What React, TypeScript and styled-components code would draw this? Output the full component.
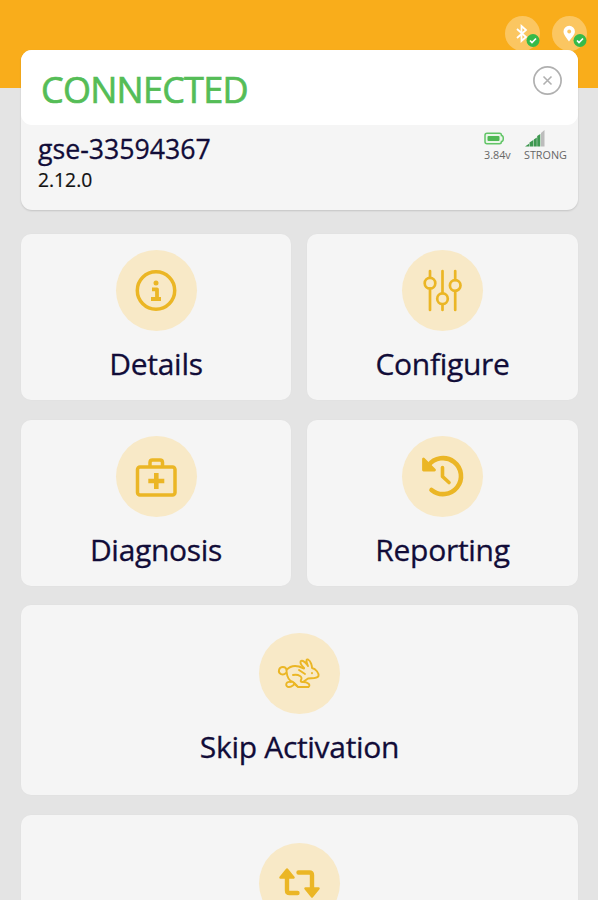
import React from "react";
import styled, { createGlobalStyle } from "styled-components";

const GlobalStyle = createGlobalStyle`
  * { box-sizing: border-box; }
  body { margin: 0; background: #e4e4e4; font-family: "Open Sans", "Noto Sans", sans-serif; }
`;

const Page = styled.main`
  height: 900px;
  overflow: hidden;
  background: linear-gradient(#f9ad1b 88px, #e4e4e4 88px);
`;

const TopBar = styled.header`
  height: 50px;
  display: flex;
  justify-content: flex-end;
  gap: 12px;
  padding: 16px 11px 0 0;
`;

const StatusDisc = styled.div`
  width: 35px;
  height: 35px;
  flex: none;
  border-radius: 50%;
  background: #fbc661;
`;

const StatusDrawing = styled.svg`
  display: block;
  overflow: visible;
`;

const Content = styled.div`
  position: relative;
  padding: 0 20px 0 21px;
`;

const DeviceCard = styled.section`
  height: 160px;
  border-radius: 11px;
  background: #f5f5f5;
  box-shadow: 0 1px 2px rgba(0, 0, 0, 0.14);
`;

const DeviceHeader = styled.div`
  height: 75px;
  display: flex;
  justify-content: space-between;
  align-items: flex-start;
  padding: 15px 15px 0 20px;
  border-radius: 11px;
  background: #fff;
`;

const Connection = styled.h1`
  margin: 0;
  font-size: 36px;
  line-height: 49px;
  font-weight: 400;
  letter-spacing: -0.75px;
  color: #55bd57;
  -webkit-text-stroke: 0.7px #55bd57;
`;

const CloseButton = styled.button`
  width: 31px;
  height: 31px;
  padding: 0;
  border: 0;
  background: none;
`;

const DeviceBody = styled.div`
  display: flex;
  justify-content: space-between;
  padding: 6px 11px 0 17px;
`;

const DeviceName = styled.div`
  font-size: 26.7px;
  line-height: 35px;
  color: #110c38;
  -webkit-text-stroke: 0.3px #110c38;
`;

const Version = styled.div`
  font-size: 19.3px;
  line-height: 28px;
  color: #111;
  -webkit-text-stroke: 0.2px #111;
`;

const Metrics = styled.div`
  display: flex;
  gap: 11px;
`;

const Metric = styled.div<{ $width: number }>`
  width: ${(p) => p.$width}px;
  font-size: 10.8px;
  line-height: 13px;
  color: #666;
  white-space: nowrap;
`;

const MetricIcon = styled.svg`
  display: block;
  width: 22px;
  height: 17px;
  overflow: visible;
`;

const Tiles = styled.div`
  display: grid;
  grid-template-columns: 270px 271px;
  grid-template-rows: 166px 166px 190px 190px;
  column-gap: 16px;
  row-gap: 19.5px;
  margin-top: 24px;
`;

const Tile = styled.button<{ $wide?: boolean }>`
  display: flex;
  flex-direction: column;
  align-items: center;
  grid-column: ${(p) => (p.$wide ? "1 / -1" : "auto")};
  padding: ${(p) => (p.$wide ? 28 : 16)}px 0 0;
  border: 0;
  border-radius: 10px;
  background: #f5f5f5;
  box-shadow: 0 0 2px rgba(0, 0, 0, 0.03);
  font-family: inherit;
`;

const IconDisc = styled.svg`
  display: block;
  flex: none;
  width: 81px;
  height: 81px;
  border-radius: 50%;
  background: #f8e9c7;
  fill: none;
  stroke: #ebb625;
  stroke-linecap: round;
  stroke-linejoin: round;
`;

const TileLabel = styled.span`
  margin-top: 13px;
  font-size: 30px;
  line-height: 40px;
  letter-spacing: -0.3px;
  color: #110c38;
  -webkit-text-stroke: 0.3px #110c38;
`;

function CheckBadge() {
  return (
    <g>
      <circle cx="28" cy="24.500" r="6.500" fill="#36ba49" />
      <path d="M25 24.500l2 2 4-4" fill="none" stroke="#fff" strokeWidth="1.700" />
    </g>
  );
}

const InfoIcon = () => (
  <IconDisc viewBox="-40 -40.500 81 81">
    <circle r="18.700" strokeWidth="3.500" />
    <circle cx="0" cy="-7.500" r="2.500" fill="#ebb625" stroke="none" />
    <path d="M-4 -1.200H1V8M-5 8.500H5" strokeWidth="3.800" strokeLinecap="butt" />
  </IconDisc>
);

const SlidersIcon = () => (
  <IconDisc viewBox="-40.500 -40.500 81 81" strokeWidth="2.700">
    <path d="M-12.500 -19.500V-13M-12.500 -2V19.500M0 -19.500V2.500M0 14V19.500M12.700 -19.500V-10.500M12.700 0.500V19.500" />
    <circle cx="-12.500" cy="-7.300" r="5.300" />
    <circle cx="0" cy="8.200" r="5.300" />
    <circle cx="12.700" cy="-5" r="5.300" />
  </IconDisc>
);

const MedicalIcon = () => (
  <IconDisc viewBox="-40 -40 81 81" strokeWidth="3.500">
    <rect x="-18.500" y="-9" width="37.500" height="28" rx="2.500" />
    <path d="M-6 -10V-13.500Q-6 -16 -3.500 -16H4Q6.500 -16 6.500 -13.500V-10" />
    <path d="M0.300 -3V13M-7.700 5H8.300" strokeWidth="4.600" strokeLinecap="butt" />
  </IconDisc>
);

const HistoryIcon = () => (
  <IconDisc viewBox="-40.500 -39.500 81 81" strokeWidth="4.600">
    <path d="M-14 -10A18 18 0 1 1 -11 14.500" />
    <path d="M-19 -16.500V-5.500H-8Z" fill="#ebb625" strokeWidth="2.800" />
    <path d="M0 -8V1L6.500 7" strokeWidth="3.600" />
  </IconDisc>
);

const RabbitIcon = () => (
  <IconDisc viewBox="-40 -40 81 81" strokeWidth="1.900">
    <path d="M-13 0C-16 3 -21 1 -20 -3C-19 -7 -13 -7 -12.500 -3C-9 -7 -4 -7.500 0 -6.500L5 -4.500" />
    <path d="M5 -5C0 -10 1 -13 4 -12C7 -11 8 -8 9 -7C7 -12 7 -14 9 -13.500C12 -12 13 -7 13 -5C17 -4 20 0 19.500 3C18 6 13 5 9 5.500L4 9C9 9 12 12 9.500 14H-1L-5 10" />
    <path d="M-12.500 -2C-12 4 -10 8 -6 9L-2 13M-8 9C-14 8 -14 14 -10 14C-7 14 -6 12 -4 11M-6 2C0 1 4 4 2 7C1 9 3 9 5 9M0 -3L6 1M13 0V.3" />
  </IconDisc>
);

const RepeatIcon = () => (
  <IconDisc viewBox="-40.500 -39.500 81 81" strokeWidth="4.400">
    <path d="M-12.500 -7V8Q-12.500 10.500 -10 10.500H-2M-1 -10H10Q12.500 -10 12.500 -7.500V8" />
    <path d="M-19 -5L-12.500 -13L-6 -5ZM6 6H19L12.500 14Z" fill="#ebb625" strokeWidth="2.500" />
  </IconDisc>
);

const tiles = [
  { label: "Details", Icon: InfoIcon },
  { label: "Configure", Icon: SlidersIcon },
  { label: "Diagnosis", Icon: MedicalIcon },
  { label: "Reporting", Icon: HistoryIcon },
  { label: "Skip Activation", Icon: RabbitIcon, wide: true },
  { label: "", Icon: RepeatIcon, wide: true },
];

export default function App() {
  return (
    <Page>
      <GlobalStyle />
      <TopBar>
        <StatusDisc>
          <StatusDrawing width="35" height="35" viewBox="0 0 35 35">
            <path d="M12 13l9 8-4.500 4V10l4.500 4-9 8" fill="none" stroke="#fff" strokeWidth="1.800" />
            <CheckBadge />
          </StatusDrawing>
        </StatusDisc>
        <StatusDisc>
          <StatusDrawing width="35" height="35" viewBox="0 0 35 35">
            <path d="M17 25.500C14 21 11.500 18.500 11.500 15.500a5.700 5.700 0 0 1 11.400 0C23 18.500 20 21 17 25.500Z" fill="#fff" />
            <circle cx="17.200" cy="15.500" r="1.900" fill="#fbc661" />
            <CheckBadge />
          </StatusDrawing>
        </StatusDisc>
      </TopBar>
      <Content>
        <DeviceCard>
          <DeviceHeader>
            <Connection>CONNECTED</Connection>
            <CloseButton aria-label="Close">
              <StatusDrawing width="31" height="31" viewBox="0 0 31 31" fill="none" stroke="#b0b0b0">
                <circle cx="15.500" cy="15.500" r="13.600" strokeWidth="1.700" />
                <path d="M11.500 11.500l8 8m0-8l-8 8" strokeWidth="1.600" />
              </StatusDrawing>
            </CloseButton>
          </DeviceHeader>
          <DeviceBody>
            <div>
              <DeviceName>gse-33594367</DeviceName>
              <Version>2.12.0</Version>
            </div>
            <Metrics>
              <Metric $width={29}>
                <MetricIcon viewBox="0 0 22 17">
                  <path d="M3 2.300H15.500Q17.500 2.300 17.500 4.500Q19.300 4.500 19.300 7.500Q19.300 10.500 17.500 10.500Q17.500 12.700 15.500 12.700H3Q1 12.700 1 10.700V4.300Q1 2.300 3 2.300Z" fill="#eaf6e9" stroke="#62c567" strokeWidth="1.500" />
                  <rect x="3.500" y="5" width="12" height="5" rx="1" fill="#50b955" />
                </MetricIcon>
                3.84v
              </Metric>
              <Metric $width={43}>
                <MetricIcon viewBox="0 0 22 17">
                  <path d="M1 15.500L5 12.700V15.500ZM5.500 15.500V11.500L9.300 9V15.500ZM9.800 15.500V8.500L12.800 6.500V15.500ZM13.200 15.500V5L16.300 3V15.500Z" fill="#3e9850" />
                  <path d="M17 15.500V2L20.500-1V15.500Z" fill="#bcbcbc" />
                </MetricIcon>
                STRONG
              </Metric>
            </Metrics>
          </DeviceBody>
        </DeviceCard>
        <Tiles>
          {tiles.map(({ label, Icon, wide }, index) => (
            <Tile key={index} $wide={wide}>
              <Icon />
              {label && <TileLabel>{label}</TileLabel>}
            </Tile>
          ))}
        </Tiles>
      </Content>
    </Page>
  );
}
